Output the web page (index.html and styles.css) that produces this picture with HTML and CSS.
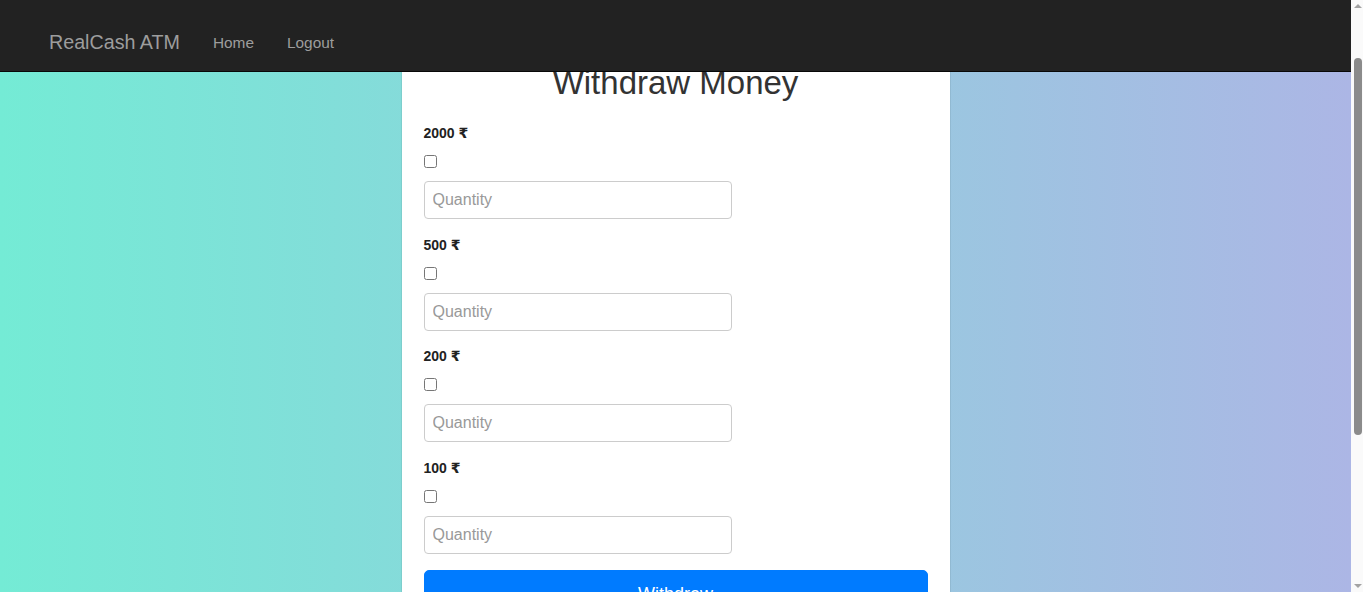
FILE: index.html
```html
<!DOCTYPE html>
<html lang="en">
<head>
<meta charset="utf-8">
<title>RealCash ATM - Withdraw</title>
<link rel="stylesheet" href="styles.css">
</head>
<body>
<nav class="navbar">
  <a class="brand" href="#">RealCash ATM</a>
  <a class="nav-link" href="#">Home</a>
  <a class="nav-link" href="#">Logout</a>
</nav>
<main class="page">
  <form class="card">
    <h2 class="title">Withdraw Money</h2>
    <div class="group">
      <label class="label">2000 ₹</label>
      <input class="check" type="checkbox">
      <input class="qty" type="text" placeholder="Quantity">
    </div>
    <div class="group">
      <label class="label">500 ₹</label>
      <input class="check" type="checkbox">
      <input class="qty" type="text" placeholder="Quantity">
    </div>
    <div class="group">
      <label class="label">200 ₹</label>
      <input class="check" type="checkbox">
      <input class="qty" type="text" placeholder="Quantity">
    </div>
    <div class="group">
      <label class="label">100 ₹</label>
      <input class="check" type="checkbox">
      <input class="qty" type="text" placeholder="Quantity">
    </div>
    <button class="btn" type="button">Withdraw</button>
  </form>
</main>
<div class="scrollbar" aria-hidden="true">
  <span class="arrow arrow-up"></span>
  <span class="thumb"></span>
  <span class="arrow arrow-down"></span>
</div>
<script src="script.js"></script>
</body>
</html>
```
FILE: styles.css
```css
html {
  scroll-behavior: auto;
  background: #fafafa;
}
body {
  margin: 0;
  font-family: "Liberation Sans", Arial, "DejaVu Sans", sans-serif;
  color: #212529;
}
.navbar {
  position: fixed;
  top: 0;
  left: 0;
  right: 12px;
  z-index: 10;
  box-sizing: border-box;
  height: 72px;
  padding: 14px 0 0 49px;
  display: flex;
  align-items: center;
  gap: 33px;
  background: #222;
  border-bottom: 1px solid #080808;
}
.brand {
  color: #9d9d9d;
  font-size: 19.7px;
  text-decoration: none;
}
.nav-link {
  color: #9d9d9d;
  font-size: 15.4px;
  text-decoration: none;
}
.page {
  display: flex;
  justify-content: center;
  margin-right: 12px;
  padding: 109px 0 173px;
  background: linear-gradient(to right, #74ebd5, #acb6e5);
}
.card {
  width: 548px;
  box-sizing: border-box;
  padding: 22px;
  background: #fff;
  box-shadow: 0 0 1px rgba(0, 0, 0, 0.35);
  display: flex;
  flex-direction: column;
}
.title {
  margin: 0 0 20px;
  font-size: 33px;
  line-height: 40px;
  font-weight: 400;
  color: #333;
  text-align: center;
}
.group {
  display: flex;
  flex-direction: column;
  align-items: flex-start;
  margin-bottom: 15.67px;
}
.label {
  font-size: 14px;
  line-height: 20px;
  font-weight: 700;
  color: #222;
}
.check {
  width: 13px;
  height: 13px;
  margin: 12px 0 13px;
}
.qty {
  box-sizing: border-box;
  width: 308px;
  height: 38px;
  padding: 0 8px;
  border: 1px solid #ccc;
  border-radius: 4px;
  font-family: inherit;
  font-size: 16px;
  color: #495057;
  background: #fff;
}
.qty::placeholder {
  color: #999;
}
.btn {
  height: 49px;
  margin-top: 0.33px;
  border: 1px solid #007bff;
  border-radius: 5px;
  background: #007bff;
  color: #fff;
  font-family: inherit;
  font-size: 18px;
  line-height: 27px;
  padding: 10px;
}
.scrollbar {
  position: fixed;
  top: 0;
  right: 0;
  bottom: 0;
  width: 12px;
  background: #fafafa;
  z-index: 20;
}
.thumb {
  position: absolute;
  top: 58px;
  left: 3px;
  width: 8px;
  height: 377px;
  border-radius: 4px;
  background: #8b8b8b;
}
.arrow {
  position: absolute;
  left: 3px;
  width: 0;
  height: 0;
  border-left: 4px solid transparent;
  border-right: 4px solid transparent;
}
.arrow-up {
  top: 4px;
  border-bottom: 4px solid #a3a3a3;
}
.arrow-down {
  bottom: 4px;
  border-top: 4px solid #a3a3a3;
}
```
FILE: script.js
```js
window.scrollTo(0, 68);
window.addEventListener('load', function () { window.scrollTo(0, 68); });
```
